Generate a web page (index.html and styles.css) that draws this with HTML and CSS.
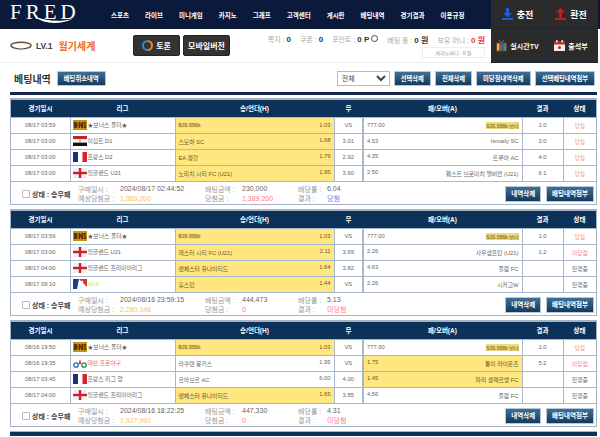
FILE: index.html
```html
<!DOCTYPE html>
<html lang="ko">
<head>
  <meta charset="UTF-8"/>
  <title>FRED 베팅내역</title>
  <link rel="stylesheet" href="styles.css">
</head>
<body>
  <svg class="defs" width="0" height="0">
    <symbol id="ic-bonus" viewBox="0 0 14 10">
      <rect width="14" height="10" fill="#C9900F"/>
      <path d="M1 2h2.500l1 1v4l-1 1H1zM5.500 2H7l1.500 3V2H10v6H8.500L7 5v3H5.500zM10.500 2H13v1.500h-1.500v1H13V8h-2.500V6.500H12v-1h-1.500z" fill="#5A3408"/>
    </symbol>
    <symbol id="ic-egypt" viewBox="0 0 14 10">
      <rect width="14" height="3.400" fill="#c8202c"/>
      <rect y="3.400" width="14" height="3.200" fill="#fff"/>
      <rect y="6.600" width="14" height="3.400" fill="#111"/>
      <circle cx="7" cy="5" r="1" fill="#c0a030"/>
    </symbol>
    <symbol id="ic-france" viewBox="0 0 14 10">
      <rect width="5" height="10" fill="#1c2f7c"/>
      <rect x="5" width="4.500" height="10" fill="#fff"/>
      <rect x="9.500" width="4.500" height="10" fill="#d8242e"/>
    </symbol>
    <symbol id="ic-england" viewBox="0 0 14 10">
      <rect width="14" height="10" fill="#f0f0f0"/>
      <rect x="5.800" width="2.400" height="10" fill="#c8202c"/>
      <rect y="3.800" width="14" height="2.400" fill="#c8202c"/>
    </symbol>
    <symbol id="ic-mlb" viewBox="0 0 14 10">
      <rect width="14" height="10" fill="#fff"/>
      <path d="M0 0h6l-2 10H0z" fill="#1c3c8c"/>
      <path d="M6 0h8v8z" fill="#c8202c" opacity=".9"/>
      <circle cx="9" cy="3" r="1.200" fill="#fff"/>
    </symbol>
    <symbol id="ic-cpbl" viewBox="0 0 14 10">
      <circle cx="3" cy="7" r="2.200" fill="none" stroke="#1c6cb0" stroke-width="1.300"/>
      <circle cx="11" cy="7" r="2.200" fill="none" stroke="#2c8c4c" stroke-width="1.300"/>
      <path d="M7 1l1.500 5H5.500z" fill="#d8303c"/>
    </symbol>
  </svg>

  <header class="top">
    <div class="top-left">
      <div class="nav-bar">
        <a class="logo">
          FRED
          <svg class="swoosh" viewBox="0 0 40 10" width="40" height="10"><path d="M1 2c9 7 24 8 38 2-13 3-26 2-38-2z" fill="#fff"/></svg>
        </a>
        <nav class="nav">
          <a>스포츠</a><a>라이브</a><a>미니게임</a><a>카지노</a><a>그래프</a>
          <a>고객센터</a><a>게시판</a><a>베팅내역</a><a>경기결과</a><a>이용규정</a>
        </nav>
      </div>
      <div class="info-bar">
        <div class="level">
          <svg width="22" height="10" viewBox="0 0 22 10">
            <ellipse cx="11" cy="4.500" rx="10" ry="3.300" fill="none" stroke="#6a4a30" stroke-width="1.400"/>
            <path d="M8 7h6l-3 2.500z" fill="#8aa0a8"/>
          </svg>
          <b class="lv">LV.1</b>
          <b class="nick">월기세계</b>
        </div>
        <div class="info-btns">
          <a class="dark-btn">
            <svg width="11" height="11" viewBox="0 0 11 11">
              <path d="M5.500 1a4.500 4.500 0 0 1 0 9" fill="none" stroke="#f08a1c" stroke-width="2"/>
              <path d="M5.500 10a4.500 4.500 0 0 1 0-9" fill="none" stroke="#2c8cd8" stroke-width="2"/>
            </svg>
            토론
          </a>
          <a class="dark-btn">모바일버전</a>
        </div>
        <div class="stats">
          <div class="stat-row">
            <span>쪽지 : <b>0</b></span>
            <span>쿠폰 : <b>0</b></span>
            <span>포인트 : <b>0 P</b> <i class="ring"></i></span>
            <span>베팅 중 : <b>0 원</b></span>
            <span>보유 머니 : <b class="red">0 원</b></span>
          </div>
          <div class="casino">카지노머니 : 0 원</div>
        </div>
      </div>
    </div>
    <div class="panel">
      <a class="panel-cell big">
        <svg width="11" height="12" viewBox="0 0 11 12"><path d="M4 0h3v5h3L5.500 9.500 1 5h3zM0 10h11v2H0z" fill="#1c5cd8"/></svg>
        충전
      </a>
      <a class="panel-cell big">
        <svg width="11" height="12" viewBox="0 0 11 12"><path d="M4 9.500h3v-5h3L5.500 0 1 4.500h3zM0 10h11v2H0z" fill="#c81c1c"/></svg>
        환전
      </a>
      <a class="panel-cell">
        <svg width="11" height="12" viewBox="0 0 11 12">
          <path d="M3 0l2.500 3L8 0" fill="none" stroke="#aa8844" stroke-width=".8"/>
          <rect y="2.500" width="11" height="9" fill="#5a4a30"/>
          <rect x="1" y="3.500" width="2.500" height="7" fill="#d8c030"/>
          <rect x="3.500" y="3.500" width="2.500" height="7" fill="#c83060"/>
          <rect x="6" y="3.500" width="2" height="7" fill="#3060c8"/>
          <rect x="8" y="3.500" width="2" height="7" fill="#30a050"/>
        </svg>
        실시간TV
      </a>
      <a class="panel-cell">
        <svg width="11" height="11" viewBox="0 0 11 11">
          <rect y="1" width="11" height="10" fill="#eee"/>
          <rect y="1" width="11" height="3.500" fill="#c82828"/>
          <rect x="2" width="1.500" height="2.500" fill="#ddd"/>
          <rect x="7.500" width="1.500" height="2.500" fill="#ddd"/>
          <circle cx="5.500" cy="7.500" r="1.500" fill="#c82828"/>
        </svg>
        출석부
      </a>
    </div>
  </header>

  <main class="content">
    <div class="title-row">
      <h2>베팅내역</h2>
      <a class="blue-btn">베팅취소내역</a>
      <div class="title-actions">
        <select class="filter"><option>전체</option></select>
        <a class="blue-btn">선택삭제</a>
        <a class="blue-btn">전체삭제</a>
        <a class="blue-btn">미당첨내역삭제</a>
        <a class="blue-btn">선택베팅내역첨부</a>
      </div>
    </div>

    <section class="card">
      <table class="bets">
        <thead>
          <tr><th class="c-date">경기일시</th><th class="c-league">리그</th><th class="c-home">승/언더(H)</th><th class="c-draw">무</th><th class="c-away">패/오버(A)</th><th class="c-score">결과</th><th class="c-state">상태</th></tr>
        </thead>
        <tbody>
          <tr>
            <td>08/17 03:59</td>
            <td class="league"><svg class="flag"><use href="#ic-bonus"/></svg>★보너스 폴더★</td>
            <td class="pick"><div class="split"><span class="hidden-name">BJS 056b</span><span>1.03</span></div></td>
            <td>VS</td>
            <td><div class="split"><span>777.00</span><span class="hidden-name mark">SJS 056b 보너</span></div></td>
            <td>1:0</td>
            <td class="win">당첨</td>
          </tr>
          <tr>
            <td>08/17 03:00</td>
            <td class="league"><svg class="flag"><use href="#ic-egypt"/></svg>이집트 D1</td>
            <td class="pick"><div class="split"><span>스모하 SC</span><span>1.68</span></div></td>
            <td>3.01</td>
            <td><div class="split"><span>4.53</span><span>Ismaily SC</span></div></td>
            <td>2:0</td>
            <td class="win">당첨</td>
          </tr>
          <tr>
            <td>08/17 03:00</td>
            <td class="league"><svg class="flag"><use href="#ic-france"/></svg>프랑스 D2</td>
            <td class="pick"><div class="split"><span>EA 겡강</span><span>1.79</span></div></td>
            <td>2.92</td>
            <td><div class="split"><span>4.35</span><span>트루아 AC</span></div></td>
            <td>4:0</td>
            <td class="win">당첨</td>
          </tr>
          <tr>
            <td>08/17 03:00</td>
            <td class="league"><svg class="flag"><use href="#ic-england"/></svg>잉글랜드 U21</td>
            <td class="pick"><div class="split"><span>노리치 시티 FC (U21)</span><span>1.95</span></div></td>
            <td>3.60</td>
            <td><div class="split"><span>2.50</span><span>웨스트 브로미치 앨비언 (U21)</span></div></td>
            <td>6:1</td>
            <td class="win">당첨</td>
          </tr>
        </tbody>
      </table>
      <div class="summary">
        <label class="check"><i class="box"></i><b>상태 : 승무패</b></label>
        <dl class="sum-col sum-a"><dt>구매일시 :</dt><dd class="strong">2024/08/17 02:44:52</dd><dt>예상당첨금 :</dt><dd class="gold">1,389,200</dd></dl>
        <dl class="sum-col sum-b"><dt>배팅금액 :</dt><dd class="strong">230,000</dd><dt>당첨금 :</dt><dd class="pink">1,389,200</dd></dl>
        <dl class="sum-col sum-c"><dt>배당률 :</dt><dd class="strong">6.04</dd><dt>결과 :</dt><dd class="blue">당첨</dd></dl>
        <div class="sum-btns"><a class="blue-btn big">내역삭제</a><a class="blue-btn big">배팅내역첨부</a></div>
      </div>
    </section>

    <section class="card">
      <table class="bets">
        <thead>
          <tr><th class="c-date">경기일시</th><th class="c-league">리그</th><th class="c-home">승/언더(H)</th><th class="c-draw">무</th><th class="c-away">패/오버(A)</th><th class="c-score">결과</th><th class="c-state">상태</th></tr>
        </thead>
        <tbody>
          <tr>
            <td>08/17 03:59</td>
            <td class="league"><svg class="flag"><use href="#ic-bonus"/></svg>★보너스 폴더★</td>
            <td class="pick"><div class="split"><span class="hidden-name">BJS 056b</span><span>1.03</span></div></td>
            <td>VS</td>
            <td><div class="split"><span>777.00</span><span class="hidden-name mark">SJS 056b 보너</span></div></td>
            <td>1:0</td>
            <td class="win">당첨</td>
          </tr>
          <tr>
            <td>08/17 03:00</td>
            <td class="league"><svg class="flag"><use href="#ic-england"/></svg>잉글랜드 U21</td>
            <td class="pick"><div class="split"><span>레스터 시티 FC (U21)</span><span>2.11</span></div></td>
            <td>3.69</td>
            <td><div class="split"><span>2.26</span><span>사우샘프턴 (U21)</span></div></td>
            <td>1:2</td>
            <td class="lose">미당첨</td>
          </tr>
          <tr>
            <td>08/17 04:00</td>
            <td class="league"><svg class="flag"><use href="#ic-england"/></svg>잉글랜드 프리미어리그</td>
            <td class="pick"><div class="split"><span>맨체스터 유나이티드</span><span>1.64</span></div></td>
            <td>3.82</td>
            <td><div class="split"><span>4.63</span><span>풀럼 FC</span></div></td>
            <td></td>
            <td>진행중</td>
          </tr>
          <tr>
            <td>08/17 09:10</td>
            <td class="league"><svg class="flag"><use href="#ic-mlb"/></svg><span class="lime">MLB</span></td>
            <td class="pick"><div class="split"><span>휴스턴</span><span>1.44</span></div></td>
            <td>VS</td>
            <td><div class="split"><span>2.26</span><span>시카고W</span></div></td>
            <td></td>
            <td>진행중</td>
          </tr>
        </tbody>
      </table>
      <div class="summary">
        <label class="check"><i class="box"></i><b>상태 : 승무패</b></label>
        <dl class="sum-col sum-a"><dt>구매일시 :</dt><dd class="strong">2024/08/16 23:59:15</dd><dt>예상당첨금 :</dt><dd class="gold">2,280,146</dd></dl>
        <dl class="sum-col sum-b"><dt>배팅금액 :</dt><dd class="strong">444,473</dd><dt>당첨금 :</dt><dd class="pink">0</dd></dl>
        <dl class="sum-col sum-c"><dt>배당률 :</dt><dd class="strong">5.13</dd><dt>결과 :</dt><dd class="pink">미당첨</dd></dl>
        <div class="sum-btns"><a class="blue-btn big">내역삭제</a><a class="blue-btn big">배팅내역첨부</a></div>
      </div>
    </section>

    <section class="card">
      <table class="bets">
        <thead>
          <tr><th class="c-date">경기일시</th><th class="c-league">리그</th><th class="c-home">승/언더(H)</th><th class="c-draw">무</th><th class="c-away">패/오버(A)</th><th class="c-score">결과</th><th class="c-state">상태</th></tr>
        </thead>
        <tbody>
          <tr>
            <td>08/16 19:50</td>
            <td class="league"><svg class="flag"><use href="#ic-bonus"/></svg>★보너스 폴더★</td>
            <td class="pick"><div class="split"><span class="hidden-name">BJS 056b</span><span>1.03</span></div></td>
            <td>VS</td>
            <td><div class="split"><span>777.00</span><span class="hidden-name mark">SJS 056b 보너</span></div></td>
            <td>1:0</td>
            <td class="win">당첨</td>
          </tr>
          <tr>
            <td>08/16 19:35</td>
            <td class="league"><svg class="flag"><use href="#ic-cpbl"/></svg><span class="coral">대만 프로야구</span></td>
            <td><div class="split"><span>라쿠텐 몽키스</span><span>1.95</span></div></td>
            <td>VS</td>
            <td class="pick"><div class="split"><span>1.75</span><span>통이 라이온즈</span></div></td>
            <td>5:2</td>
            <td class="lose">미당첨</td>
          </tr>
          <tr>
            <td>08/17 03:45</td>
            <td class="league"><svg class="flag"><use href="#ic-france"/></svg>프랑스 리그 앙</td>
            <td><div class="split"><span>르아브르 AC</span><span>6.00</span></div></td>
            <td>4.00</td>
            <td class="pick"><div class="split"><span>1.45</span><span>파리 생제르맹 FC</span></div></td>
            <td></td>
            <td>진행중</td>
          </tr>
          <tr>
            <td>08/17 04:00</td>
            <td class="league"><svg class="flag"><use href="#ic-england"/></svg>잉글랜드 프리미어리그</td>
            <td class="pick"><div class="split"><span>맨체스터 유나이티드</span><span>1.65</span></div></td>
            <td>3.85</td>
            <td><div class="split"><span>4.56</span><span>풀럼 FC</span></div></td>
            <td></td>
            <td>진행중</td>
          </tr>
        </tbody>
      </table>
      <div class="summary">
        <label class="check"><i class="box"></i><b>상태 : 승무패</b></label>
        <dl class="sum-col sum-a"><dt>구매일시 :</dt><dd class="strong">2024/08/16 18:22:25</dd><dt>예상당첨금 :</dt><dd class="gold">1,927,992</dd></dl>
        <dl class="sum-col sum-b"><dt>배팅금액 :</dt><dd class="strong">447,330</dd><dt>당첨금 :</dt><dd class="pink">0</dd></dl>
        <dl class="sum-col sum-c"><dt>배당률 :</dt><dd class="strong">4.31</dd><dt>결과 :</dt><dd class="pink">미당첨</dd></dl>
        <div class="sum-btns"><a class="blue-btn big">내역삭제</a><a class="blue-btn big">배팅내역첨부</a></div>
      </div>
    </section>

    <div class="next-card"></div>
  </main>
</body>
</html>
```

FILE: styles.css
```css
*{
  margin: 0px;
  padding: 0px;
  box-sizing: border-box;
  font-family: "Liberation Sans", "Noto Sans CJK KR", sans-serif;
}

html, body{
  height: 437px;
  overflow: hidden;
  background-color: #FFF;
}

.defs{
  display: block;
  height: 0px;
}

/* top */
.top{
  display: grid;
  grid-template-columns: 491px 107px;
  background: linear-gradient(#0B1A3B 29px, #FFF 29px);
}

.nav-bar{
  display: flex;
  align-items: center;
  height: 29px;
}

.logo{
  position: relative;
  align-self: flex-start;
  flex: none;
  width: 111px;
  padding-left: 10px;
  color: #FFF;
  font-family: "Liberation Serif", serif;
  font-size: 21px;
  letter-spacing: 4px;
  line-height: 24px;
}

.swoosh{
  position: absolute;
  left: 34px;
  top: 15px;
}

.nav{
  display: flex;
  gap: 16px;
}

.nav a{
  color: #FFF;
  font-size: 6.500px;
  font-weight: bold;
  white-space: nowrap;
}

.info-bar{
  display: flex;
  align-items: center;
  height: 34px;
  padding-left: 10px;
  border-bottom: 1px solid #EEE;
}

.level{
  display: flex;
  align-items: center;
  width: 123px;
  gap: 4px;
}

.lv{
  font-size: 8.500px;
  color: #444;
}

.nick{
  font-size: 10px;
  color: #F26A22;
  margin-left: 2px;
}

.info-btns{
  display: flex;
  gap: 3px;
}

.dark-btn{
  display: flex;
  align-items: center;
  justify-content: center;
  gap: 3px;
  width: 47px;
  height: 21px;
  color: #FFF;
  font-size: 8px;
  font-weight: bold;
  background-color: #333;
  border: 1px solid #222;
  border-radius: 2px;
}

.stats{
  display: flex;
  flex-direction: column;
  align-items: flex-end;
  flex: 1;
  gap: 2px;
  padding-right: 6px;
}

.stat-row{
  display: flex;
  gap: 9px;
  font-size: 7px;
  color: #AAA;
}

.stat-row b{
  color: #333;
  font-size: 8px;
}

.stat-row b.red{
  color: #E33;
}

.ring{
  display: inline-block;
  width: 7px;
  height: 7px;
  border: 1.500px solid #445;
  border-radius: 50%;
}

.casino{
  width: 63px;
  height: 11px;
  font-size: 5px;
  line-height: 10px;
  text-align: center;
  color: #888;
  border: 1px solid #EEE;
}

.panel{
  display: grid;
  grid-template-columns: 54px 53px;
  grid-template-rows: 29px 34px;
  background-color: #2B2B2B;
}

.panel-cell{
  display: flex;
  align-items: center;
  justify-content: center;
  gap: 3px;
  color: #FFF;
  font-size: 7px;
  font-weight: bold;
  border-right: 1px solid #222B38;
  border-bottom: 1px solid #1E2430;
}

.panel-cell.big{
  font-size: 9px;
  gap: 4px;
}

/* content */
.content{
  padding: 0px 3px 0px 10px;
}

.title-row{
  display: flex;
  align-items: center;
  height: 32px;
  padding: 2px 2px 0px 4px;
  gap: 6px;
  border-bottom: 3px solid #14274A;
}

.title-row h2{
  font-size: 10px;
  color: #333;
}

.title-actions{
  display: flex;
  align-items: center;
  margin-left: auto;
  gap: 4px;
}

.filter{
  width: 53px;
  height: 15px;
  font-size: 7px;
  color: #444;
  background-color: #FFF;
  border: 1px solid #BBB;
}

.blue-btn{
  display: block;
  height: 15px;
  padding: 0px 6px;
  color: #FFF;
  font-size: 6.300px;
  font-weight: bold;
  line-height: 13px;
  white-space: nowrap;
  background: linear-gradient(#3F6F95, #123A5E);
  border: 1px solid #B8C8D8;
}

.blue-btn.big{
  height: 16px;
  padding: 0px 5px;
  font-size: 6.500px;
  line-height: 14px;
}

.card{
  margin-top: 4px;
  height: 107px;
  border: 1px solid #A4B4C6;
  border-top-width: 2px;
  background-color: #FFF;
}

.title-row + .card{
  margin-top: 3px;
}

.next-card{
  height: 5px;
  margin-top: 4px;
  background-color: #0C3259;
  border-top: 1px solid #A4B4C6;
}

.bets{
  width: 100%;
  table-layout: fixed;
  border-collapse: collapse;
}

.bets th{
  height: 17px;
  color: #FFF;
  font-size: 6.500px;
  background-color: #0C3259;
}

.c-date{ width: 59px; }
.c-league{ width: 105px; }
.c-home{ width: 159px; }
.c-draw{ width: 29px; }
.c-away{ width: 159px; }
.c-score{ width: 41px; }

.bets td{
  height: 16px;
  padding: 0px 1px;
  font-size: 5.800px;
  text-align: center;
  color: #666;
  white-space: nowrap;
  overflow: hidden;
  border: 1px solid #A8B8CA;
}

.bets td:first-child{
  border-left: 0px;
}

.bets td:last-child{
  border-right: 0px;
}

.bets td:nth-child(5){
  border-left: 2px solid #A8B8CA;
}

.bets td.league{
  text-align: left;
  padding-left: 2px;
}

.flag{
  width: 14px;
  height: 10px;
  margin-right: 1px;
  vertical-align: middle;
}

.bets td.pick{
  color: #665A28;
  background-color: #FFE680;
}

.split{
  display: flex;
  justify-content: space-between;
  padding: 0px 2px;
}

.hidden-name{
  color: #A08A3A;
  font-size: 5px;
  text-shadow: 0px 0px 1px #776020;
}

.hidden-name.mark{
  background-color: #F2DC80;
}

.bets td.win{
  color: #F59A80;
}

.bets td.lose{
  color: #F08090;
}

.lime{
  color: #C8F060;
}

.coral{
  color: #F26060;
}

.summary{
  display: flex;
  align-items: center;
  height: 24px;
  padding-left: 11px;
}

.check{
  display: flex;
  align-items: center;
  gap: 2px;
  width: 56px;
  font-size: 7px;
  color: #444;
}

.box{
  width: 8px;
  height: 8px;
  flex: none;
  border: 1px solid #BBB;
  border-radius: 1px;
}

.sum-col{
  display: grid;
  grid-template-rows: 9.500px 9.500px;
  align-items: center;
  font-size: 7px;
  color: #999;
}

.sum-a{
  grid-template-columns: 42px 85px;
}

.sum-b{
  grid-template-columns: 37px 56px;
}

.sum-c{
  grid-template-columns: 29px 40px;
}

.strong{
  color: #666;
}

.gold{
  color: #F2C46E;
}

.pink{
  color: #FF7A80;
}

.blue{
  color: #7A7AFF;
}

.sum-btns{
  display: flex;
  gap: 5px;
  margin-left: auto;
  padding-right: 2px;
}
```
